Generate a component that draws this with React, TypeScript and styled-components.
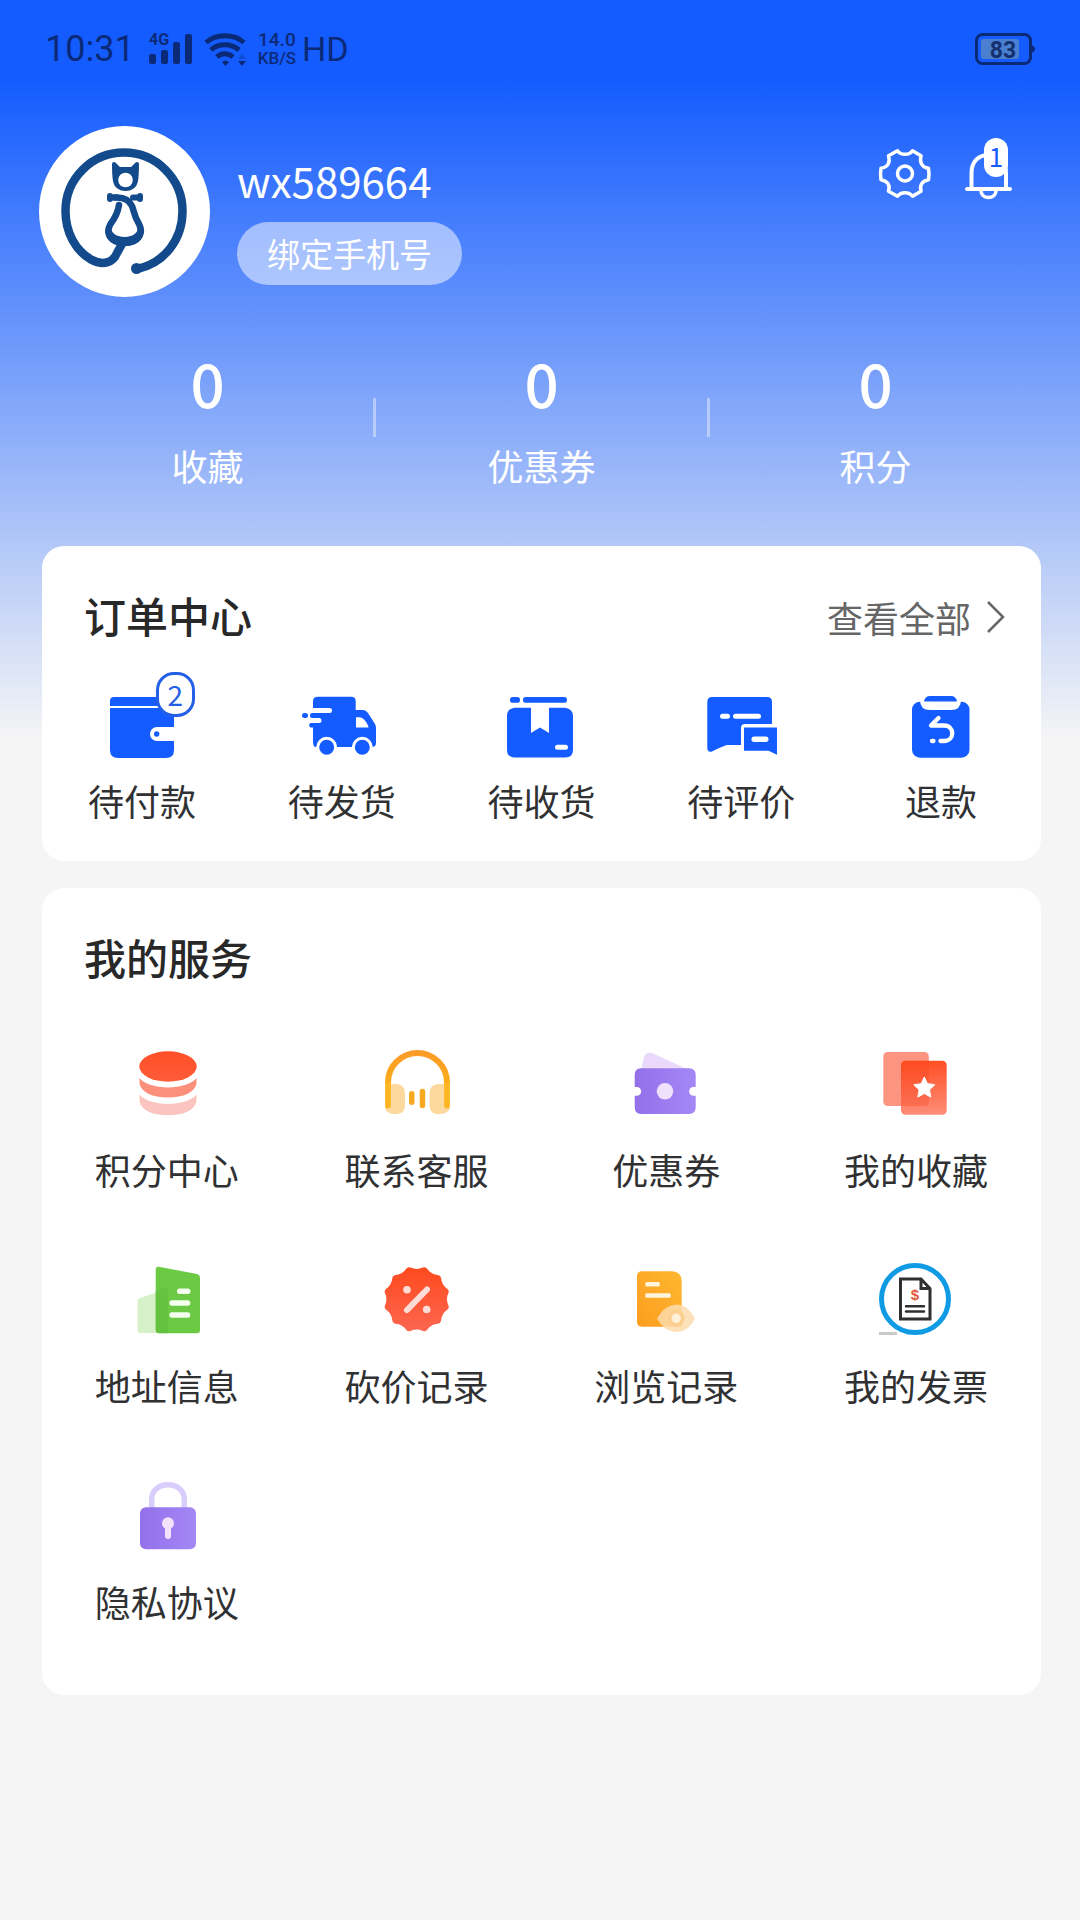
import React from "react";
import styled, { createGlobalStyle } from "styled-components";

const GlobalStyle = createGlobalStyle`
  *, *::before, *::after { box-sizing: border-box; }
  body {
    margin: 0;
    background: #f5f5f5;
    font-family: "Noto Sans CJK SC", sans-serif;
    color: #303133;
  }
  a { color: inherit; text-decoration: none; }
  button { font: inherit; color: inherit; border: 0; padding: 0; background: none; cursor: pointer; }
  h2, p { margin: 0; }
  svg { display: block; overflow: visible; flex: none; }
`;

const blue = "#145cff";
const ink = "#0a2a78";

const Page = styled.div`
  min-height: 100vh;
  background: linear-gradient(${blue} 80px, #f5f5f5 740px);
`;

const StatusBar = styled.div`
  display: flex;
  align-items: center;
  height: 98px;
  padding: 0 45px;
  color: ${ink};
  font-family: Roboto, sans-serif;
`;

const Clock = styled.span`
  font-size: 36px;
  line-height: 40px;
`;

const Network = styled.span`
  font-size: 34px;
  line-height: 40px;
`;

const Signal = styled.div`
  display: flex;
  gap: 12px;
  margin: 0 12px 0 14px;
`;

const Speed = styled.div`
  display: flex;
  flex-direction: column;
  align-items: center;
  margin-right: 6px;
  font-weight: 500;
  line-height: 18px;
`;

const SpeedValue = styled.span`
  font-size: 19px;
`;

const SpeedUnit = styled.span`
  font-size: 17px;
`;

const Battery = styled.div`
  margin-left: auto;
`;

const Profile = styled.section`
  display: flex;
  align-items: flex-start;
  padding: 28px 68px 0 39px;
`;

const Avatar = styled.div`
  width: 171px;
  height: 171px;
  border-radius: 50%;
  background: #fff;
  flex: none;
`;

const Identity = styled.div`
  flex: 1;
  padding: 24px 0 0 27px;
`;

const UserName = styled.p`
  color: #fff;
  font-size: 42px;
  line-height: 60px;
`;

const BindButton = styled.button`
  height: 63px;
  margin-top: 12px;
  padding: 0 30px;
  border-radius: 32px;
  background: rgba(255, 255, 255, 0.5);
  color: #fff;
  font-size: 33px;
  line-height: 63px;
`;

const Actions = styled.div`
  display: flex;
  align-items: flex-end;
  gap: 34px;
  padding-top: 12px;
`;

const IconButton = styled.button`
  position: relative;
`;

const BellCount = styled.span`
  position: absolute;
  left: 19px;
  top: 0;
  width: 24px;
  height: 39px;
  border-radius: 12px;
  background: #fff;
  color: ${blue};
  font-size: 26px;
  line-height: 35px;
  text-align: center;
`;

const Stats = styled.nav`
  display: flex;
  align-items: center;
  padding: 45px 39px 54px 42px;
  color: #fff;
`;

const Stat = styled.a`
  flex: 1;
  display: flex;
  flex-direction: column;
  align-items: center;
  gap: 16px;
`;

const StatValue = styled.span`
  font-size: 60px;
  line-height: 80px;
  font-weight: 500;
`;

const StatLabel = styled.span`
  font-size: 36px;
  line-height: 54px;
`;

const Divider = styled.i`
  width: 3px;
  height: 39px;
  background: rgba(255, 255, 255, 0.4);
`;

const Cards = styled.main`
  display: flex;
  flex-direction: column;
  gap: 27px;
  padding: 0 39px 40px 42px;
`;

const Card = styled.section`
  border-radius: 22px;
  background: #fff;
`;

const CardHeader = styled.header`
  display: flex;
  align-items: baseline;
  justify-content: space-between;
  height: 142px;
  padding: 39px 36px 0 42px;
`;

const CardTitle = styled.h2`
  color: #282828;
  font-size: 42px;
  line-height: 60px;
  font-weight: 500;
`;

const MoreLink = styled.a`
  display: flex;
  align-items: center;
  gap: 16px;
  color: #666;
  font-size: 36px;
  line-height: 54px;
`;

const TileGrid = styled.div<{ $columns: number; $top: number }>`
  display: grid;
  grid-template-columns: repeat(${(p) => p.$columns}, 1fr);
  padding-top: ${(p) => p.$top}px;
`;

const Tile = styled.a<{ $gap: number; $bottom: number }>`
  display: flex;
  flex-direction: column;
  align-items: center;
  gap: ${(p) => p.$gap}px;
  padding-bottom: ${(p) => p.$bottom}px;
  font-size: 36px;
  line-height: 54px;
`;

const TileIcon = styled.span`
  position: relative;
  width: 72px;
  height: 72px;
`;

const OrderCount = styled.span`
  position: absolute;
  left: 50px;
  top: -19px;
  width: 39px;
  height: 45px;
  border: 3px solid #2460e6;
  border-radius: 18px;
  background: #fff;
  color: #2460e6;
  font-size: 28px;
  line-height: 38px;
  text-align: center;
`;

const Art = ({ children }: { children: React.ReactNode }) => (
  <svg width="72" height="72" viewBox="0 0 72 72" aria-hidden="true">
    {children}
  </svg>
);

const SignalIcon = () => (
  <svg width="43" height="32" viewBox="0 0 43 32" fill={ink}>
    <text x="0" y="12" fontSize="16" fontWeight="700" fontFamily="Roboto, sans-serif">4G</text>
    <rect x="0" y="21" width="7" height="10" rx="2" />
    <rect x="12" y="17" width="7" height="14" rx="2" />
    <rect x="24" y="9" width="7" height="22" rx="2" />
    <rect x="36" y="1" width="7" height="30" rx="2" />
  </svg>
);

const WifiIcon = () => (
  <svg width="42" height="32" viewBox="0 0 42 32" fill="none" stroke={ink} strokeWidth="5">
    <path d="M2 9.500 C12 0.500 30 0.500 40 9.500" />
    <path d="M7 17 C14 10 27 10 35 17" />
    <path d="M13 24 C17 19.500 24 19.500 29 24" />
    <path d="M18 29 Q21 26 25 29 L21.500 33Z M34 28 h8 l-4 5z" fill={ink} stroke="none" />
    <path d="M34 26 h8 l-4 -5z" fill={ink} fillOpacity=".35" stroke="none" />
  </svg>
);

const BatteryIcon = () => (
  <svg width="60" height="32" viewBox="0 0 60 32">
    <rect x="1.500" y="1.500" width="54" height="29" rx="6" fill="none" stroke={ink} strokeWidth="3" />
    <path d="M57 12.500 q3 1 3 3.500 t-3 3.500z" fill={ink} />
    <rect x="6" y="6" width="38" height="20" rx="3" fill="#4a80cf" />
    <text x="28" y="24.500" fontSize="23" fontWeight="700" fontFamily="Roboto, sans-serif" fill="#14306e" textAnchor="middle">83</text>
  </svg>
);

const CatLogo = () => (
  <svg width="171" height="171" viewBox="0 0 171 171" fill="none" stroke="#124a8c" strokeWidth="8.500" strokeLinecap="round" strokeLinejoin="round" role="img" aria-label="头像">
    <path d="M98 143 C126 137 143.500 113 143.500 85 A58.500 58.500 0 0 0 26.500 85 C26.500 107 37 125 52 133.500 C64 140 74 137 78 127 L83 118" />
    <circle cx="97.500" cy="142.500" r="3" strokeWidth="5" />
    <path d="M80 79 C79 86 76 92 71.500 98 C67 106 69 116 85.500 117 C102 116 104 106 100 98 C95 90 95 85 93 80 C90 73 84 71 76 71.500" strokeWidth="6.500" />
    <path d="M70 99 C66 108 70 118 85.500 118 C101 118 105 108 101 99 C102 108 95 113 85.500 113 C76 113 69 108 70 99Z" strokeWidth="4" fill="#124a8c" />
    <path d="M71 70 V73 M101 70 V73 M72 71.500 L78 71.500 M94 71.500 L101 71.500" strokeWidth="6" />
    <path d="M75 38 L80 43 H93 L98 38 C98 44 98 49 97 55 C96 60 92 63 86.500 63 C81 63 77 60 76 55 C75 49 75 44 75 38Z" fill="#124a8c" strokeWidth="4" />
    <circle cx="86.500" cy="54" r="7.300" fill="#fff" stroke="none" />
  </svg>
);

const GearIcon = () => (
  <svg width="52" height="52" viewBox="0 0 52 52" fill="none" stroke="#fff" strokeWidth="3.500" strokeLinejoin="round">
    <path d="M18.500 2.700 C22 7.500 30 7.500 33.500 2.700 L42 7.700 C40.500 14.500 42.500 19 49.500 20.300 Q50.500 26 49.500 31.700 C42.500 33 40.500 37.500 42 43.300 L33.500 48.300 C30 43.500 22 43.500 18.500 48.300 L9.500 43.300 C11.500 37.500 9 33 2 31.700 Q1 26 2 20.300 C9 19 11.500 14.500 9.500 7.700 Z" />
    <circle cx="26" cy="25.500" r="7.500" />
  </svg>
);

const BellIcon = () => (
  <svg width="47" height="62" viewBox="0 0 47 62" fill="none" stroke="#fff" strokeWidth="4" strokeLinecap="round">
    <path d="M2 51 H45 M6.500 50 V35 C6.500 24 13 17 23.500 17 C34 17 41 24 41 35 V50" />
    <path d="M16 52 C16 62 31 62 31 52" strokeWidth="3.500" />
  </svg>
);

const ChevronIcon = () => (
  <svg width="18" height="32" viewBox="0 0 18 32" fill="none" stroke="#666" strokeWidth="2.500">
    <path d="M1 1 L16 16 L1 31" />
  </svg>
);

const WalletArt = () => (
  <Art>
    <path d="M4 15 V10 Q4 6 8 6 H64 Q68 6 68 10 V36 H51 A7 7 0 0 0 51 50 H68 V59 Q68 67 60 67 H12 Q4 67 4 59 V17 H56 V15Z" fill={blue} />
    <circle cx="50.700" cy="43" r="2.700" fill={blue} />
  </Art>
);

const TruckArt = () => (
  <Art>
    <path d="M7 17 V10 Q7 5.700 12 5.700 H45 Q49.700 5.700 49.700 10 V19 H57 Q60 19 62 22 L69 33 Q70 35 70 37 V52 Q70 56 66 56 H10 Q7 56 7 51 V36.500 H4.500 A2.500 2.500 0 0 1 4.500 32 H13 A2.500 2.500 0 0 0 13 27 H6.500 A2.500 2.500 0 0 1 6.500 22 H23.500 A2.500 2.500 0 0 0 23.500 17Z" fill={blue} />
    <rect x="-4" y="22" width="6" height="5" rx="2.500" fill={blue} />
    <path d="M50 26.300 H53 Q56 26.300 58 28.500 Q62 33 62.500 36.500 H50Z" fill="#fff" />
    <circle cx="20.700" cy="56.300" r="9" fill={blue} stroke="#fff" strokeWidth="3" />
    <circle cx="56.300" cy="56.300" r="9" fill={blue} stroke="#fff" strokeWidth="3" />
  </Art>
);

const ParcelArt = () => (
  <Art>
    <rect x="5" y="6" width="10" height="5.700" rx="2.800" fill={blue} />
    <rect x="18" y="6" width="44" height="5.700" rx="2.800" fill={blue} />
    <path d="M10 16.700 H26 V42 L35 36.500 L44 42 V16.700 H60 Q68 18 68 25 V59 Q68 66.500 60 66.500 H10 Q2 66.500 2 59 V25 Q2 17.500 10 16.700Z" fill={blue} />
    <rect x="50" y="53.700" width="13" height="5" rx="2.500" fill="#fff" />
  </Art>
);

const ReviewArt = () => (
  <Art>
    <path d="M7 6 H62 Q67 6 67 11 V33 H40 Q36 33 36 37 V54 H22 Q20 54 7 60.500 Q2.300 61.500 2.300 57 V11 Q2.300 6 7 6Z" fill={blue} />
    <path d="M39 36.500 H72 V63.700 L63.500 59.700 H39Z" fill={blue} />
    <g fill="#fff">
      <rect x="15" y="22.700" width="10" height="5" rx="2.500" />
      <rect x="28" y="22.700" width="28" height="5" rx="2.500" />
      <rect x="46.500" y="45.500" width="17" height="5.500" rx="2.700" />
    </g>
  </Art>
);

const RefundArt = () => (
  <Art>
    <rect x="7" y="10.700" width="57.500" height="56" rx="8" fill={blue} />
    <path d="M15 9 H56 Q56 19 46 19 H25 Q15 19 15 9Z" fill="#fff" />
    <path d="M19 10.500 Q20 5 25 5 H46 Q51 5 52 10.500Z" fill={blue} />
    <path d="M33.500 27 L26 34.500 H39 C50 34.500 50 50 39 50 H35.500 M27 50 h1.500" fill="none" stroke="#fff" strokeWidth="4.300" strokeLinecap="round" strokeLinejoin="round" />
  </Art>
);

const CoinsArt = () => (
  <Art>
    <defs>
      <linearGradient id="coinTop" x1="0" y1="0" x2="0" y2="1">
        <stop offset="0" stopColor="#ff4e28" />
        <stop offset="1" stopColor="#ff5c38" />
      </linearGradient>
    </defs>
    <path d="M8.500 47.500 C18 60 56 60 65.500 47.500 V54 C64 63 53 68.300 37 68.300 S10 63 8.500 54Z" fill="#fbc4be" />
    <path d="M8.500 31 C18 43.500 56 43.500 65.500 31 V37 C63 45.500 53 50.500 37 50.500 S11 45.500 8.500 37Z" fill="#fc907c" />
    <ellipse cx="37" cy="19.500" rx="28.700" ry="15.200" fill="url(#coinTop)" />
  </Art>
);

const HeadsetArt = () => (
  <Art>
    <defs>
      <linearGradient id="band" x1="0" y1="0" x2="0" y2="1">
        <stop offset="0" stopColor="#fc9c28" />
        <stop offset="1" stopColor="#fdb914" />
      </linearGradient>
    </defs>
    <path d="M7 59 V35.500 A29.500 29.500 0 0 1 66 35.500 V59" fill="none" stroke="url(#band)" strokeWidth="6" strokeLinecap="round" />
    <path d="M4 37 H16 Q24 38 24 46 V58 Q24 67 15 67.300 Q4 67.500 4 59Z M69 37 H57 Q48.500 38 48.500 46 V58 Q48.500 67 57 67.300 Q69 67.500 69 59Z" fill="#fcd28e" fillOpacity=".85" />
    <path d="M7 38 V58.500 M66 38 V58.500" stroke="#fdb521" strokeWidth="5.500" strokeLinecap="round" />
    <rect x="28" y="44" width="5.500" height="14" rx="2.700" fill="#f9a91f" />
    <rect x="38.700" y="41.700" width="5.500" height="19.500" rx="2.700" fill="#f9a91f" />
  </Art>
);

const CouponArt = () => (
  <Art>
    <defs>
      <linearGradient id="violet" x1="0" y1="0" x2="1" y2="0">
        <stop offset="0" stopColor="#9270ea" />
        <stop offset="1" stopColor="#a488f6" />
      </linearGradient>
    </defs>
    <path d="M11 23 L14 10 Q16 4.500 22 6 L57 22Z" fill="#ead9fb" />
    <path d="M11 21.300 H59 Q65.700 21.300 65.700 28 V40 H63.500 A4.400 4.400 0 0 0 63.500 48.800 H65.700 V60 Q65.700 67 59 67 H11 Q4.700 67 4.700 60 V48.800 H6.800 A4.400 4.400 0 0 0 6.800 40 H4.700 V28 Q4.700 21.300 11 21.300Z" fill="url(#violet)" />
    <circle cx="35" cy="44.300" r="8.300" fill="#efe0fd" />
  </Art>
);

const FavoriteArt = () => (
  <Art>
    <defs>
      <linearGradient id="favFront" x1="0" y1="0" x2="0" y2="1">
        <stop offset="0" stopColor="#ff4f25" />
        <stop offset="1" stopColor="#fd8d78" />
      </linearGradient>
    </defs>
    <rect x="3.300" y="5" width="45.500" height="54" rx="4.500" fill="#fc9482" />
    <rect x="21" y="13.700" width="45.700" height="54" rx="4.500" fill="url(#favFront)" />
    <path d="M21 18 Q21 13.700 25.500 13.700 H48.800 V54.500 Q48.800 59 44.300 59 H21Z" fill="#f8431c" fillOpacity=".3" />
    <path d="M44.300 30 l3.200 6.700 7.300 1 -5.300 5.100 1.300 7.300 -6.500 -3.500 -6.500 3.500 1.300 -7.300 -5.300 -5.100 7.300 -1z" fill="#fff" stroke="#fff" strokeLinejoin="round" />
  </Art>
);

const AddressArt = () => (
  <Art>
    <path d="M6.500 38 Q6.500 36 8.500 35.300 L25 29.500 V70 H9 Q6.500 70 6.500 67.500Z" fill="#d6f1c9" />
    <path d="M24.700 7 Q24.700 3 29 4 L66 11 Q69 12 69 15 V67 Q69 70.300 66 70.300 H28 Q24.700 70.300 24.700 67Z" fill="#6bc944" />
    <path d="M24.700 28 L37 24 V70.300 H28 Q24.700 70.300 24.700 67Z" fill="#5fba3c" fillOpacity=".5" />
    <g fill="#f4fff0">
      <rect x="46" y="25.500" width="13.500" height="5.500" rx="2.700" />
      <rect x="38.300" y="37.300" width="21" height="5.500" rx="2.700" />
      <rect x="38.300" y="49.300" width="21" height="5.500" rx="2.700" />
    </g>
  </Art>
);

const sealPoints = Array.from({ length: 12 }, (_, i) => {
  const at = (deg: number, r: number) => {
    const a = (deg * Math.PI) / 180;
    return `${(35.7 + r * Math.cos(a)).toFixed(1)} ${(36.3 + r * Math.sin(a)).toFixed(1)}`;
  };
  const d = i * 30 + 15;
  return `${i ? "L" : "M"}${at(d - 4, 32.3)} Q${at(d, 34)} ${at(d + 4, 32.3)} Q${at(d + 15, 28.8)} ${at(d + 26, 32.3)}`;
}).join(" ");

const BargainArt = () => (
  <Art>
    <defs>
      <linearGradient id="seal" x1="0" y1="0" x2="0" y2="1">
        <stop offset="0" stopColor="#ff4a1e" />
        <stop offset="1" stopColor="#fc6650" />
      </linearGradient>
    </defs>
    <path d={sealPoints + "Z"} fill="url(#seal)" />
    <path d="M26 47 L46 26.500" stroke="#ffdcd6" strokeWidth="6" strokeLinecap="round" />
    <circle cx="26" cy="26.700" r="3.800" fill="#ffdcd6" />
    <circle cx="45.700" cy="46.500" r="3.800" fill="#ffdcd6" />
  </Art>
);

const HistoryArt = () => (
  <Art>
    <defs>
      <linearGradient id="note" x1="0" y1="1" x2="1" y2="0">
        <stop offset="0" stopColor="#fd9d20" />
        <stop offset="1" stopColor="#fdb730" />
      </linearGradient>
    </defs>
    <path d="M12 8.300 H42 Q51.700 9 51.700 18 V63.700 H12 Q7 63.700 7 58.500 V13.500 Q7 8.300 12 8.300Z" fill="url(#note)" />
    <rect x="15.300" y="19" width="14.500" height="4.500" rx="1.500" fill="#fff4dc" />
    <rect x="15.300" y="30.200" width="25.500" height="4.500" rx="1.500" fill="#fff4dc" />
    <path d="M27 55.500 Q35 41.500 46.300 41.500 T65 55.500 Q58 69 46.300 69 T27 55.500Z" fill="#fddcab" fillOpacity=".85" />
    <circle cx="46.300" cy="55.300" r="6.500" fill="#fff0d8" stroke="#fccf90" strokeWidth="3.500" />
  </Art>
);

const InvoiceArt = () => (
  <Art>
    <rect x="-1" y="69" width="18" height="3" fill="#c9c9c9" />
    <circle cx="35" cy="36" r="33.500" fill="#fff" stroke="#0f9be4" strokeWidth="5" />
    <path d="M20.500 16 H41 L50 25.500 V56 H20.500Z M41 16 V25.500 H50" fill="none" stroke="#2f2f2f" strokeWidth="3" />
    <path d="M26 43.300 H44 M26 48.500 H44" stroke="#2f2f2f" strokeWidth="2.500" strokeLinecap="round" />
    <text x="35" y="37" fontSize="15" fontWeight="700" fontFamily="Liberation Sans, sans-serif" fill="#e2583a" textAnchor="middle">$</text>
  </Art>
);

const PrivacyArt = () => (
  <Art>
    <path d="M20.700 30 V20 C21 1 53 1 53.300 20 V30" fill="none" stroke="#d8cdfb" strokeWidth="5.500" />
    <rect x="9" y="28.300" width="56" height="42" rx="6" fill="url(#violet)" />
    <circle cx="37" cy="44.300" r="6" fill="#f3e2fb" />
    <rect x="34" y="46" width="6" height="14" rx="3" fill="#f3e2fb" />
  </Art>
);

const stats = [
  { label: "收藏", value: 0 },
  { label: "优惠券", value: 0 },
  { label: "积分", value: 0 },
];

const orders = [
  { label: "待付款", art: <WalletArt />, count: 2 },
  { label: "待发货", art: <TruckArt /> },
  { label: "待收货", art: <ParcelArt /> },
  { label: "待评价", art: <ReviewArt /> },
  { label: "退款", art: <RefundArt /> },
];

const services = [
  { label: "积分中心", art: <CoinsArt /> },
  { label: "联系客服", art: <HeadsetArt /> },
  { label: "优惠券", art: <CouponArt /> },
  { label: "我的收藏", art: <FavoriteArt /> },
  { label: "地址信息", art: <AddressArt /> },
  { label: "砍价记录", art: <BargainArt /> },
  { label: "浏览记录", art: <HistoryArt /> },
  { label: "我的发票", art: <InvoiceArt /> },
  { label: "隐私协议", art: <PrivacyArt /> },
];

export default function App() {
  return (
    <Page>
      <GlobalStyle />
      <StatusBar>
        <Clock>10:31</Clock>
        <Signal>
          <SignalIcon />
          <WifiIcon />
        </Signal>
        <Speed>
          <SpeedValue>14.0</SpeedValue>
          <SpeedUnit>KB/S</SpeedUnit>
        </Speed>
        <Network>HD</Network>
        <Battery>
          <BatteryIcon />
        </Battery>
      </StatusBar>

      <Profile>
        <Avatar>
          <CatLogo />
        </Avatar>
        <Identity>
          <UserName>wx589664</UserName>
          <BindButton type="button">绑定手机号</BindButton>
        </Identity>
        <Actions>
          <IconButton type="button" aria-label="设置">
            <GearIcon />
          </IconButton>
          <IconButton type="button" aria-label="消息">
            <BellIcon />
            <BellCount>1</BellCount>
          </IconButton>
        </Actions>
      </Profile>

      <Stats>
        {stats.map((s, i) => (
          <React.Fragment key={s.label}>
            {i > 0 && <Divider />}
            <Stat href="#">
              <StatValue>{s.value}</StatValue>
              <StatLabel>{s.label}</StatLabel>
            </Stat>
          </React.Fragment>
        ))}
      </Stats>

      <Cards>
        <Card>
          <CardHeader>
            <CardTitle>订单中心</CardTitle>
            <MoreLink href="#">
              查看全部
              <ChevronIcon />
            </MoreLink>
          </CardHeader>
          <TileGrid $columns={5} $top={3}>
            {orders.map((o) => (
              <Tile key={o.label} href="#" $gap={10} $bottom={34}>
                <TileIcon>
                  {o.art}
                  {o.count && <OrderCount>{o.count}</OrderCount>}
                </TileIcon>
                {o.label}
              </Tile>
            ))}
          </TileGrid>
        </Card>

        <Card>
          <CardHeader>
            <CardTitle>我的服务</CardTitle>
          </CardHeader>
          <TileGrid $columns={4} $top={17}>
            {services.map((s) => (
              <Tile key={s.label} href="#" $gap={23} $bottom={67}>
                <TileIcon>{s.art}</TileIcon>
                {s.label}
              </Tile>
            ))}
          </TileGrid>
        </Card>
      </Cards>
    </Page>
  );
}
